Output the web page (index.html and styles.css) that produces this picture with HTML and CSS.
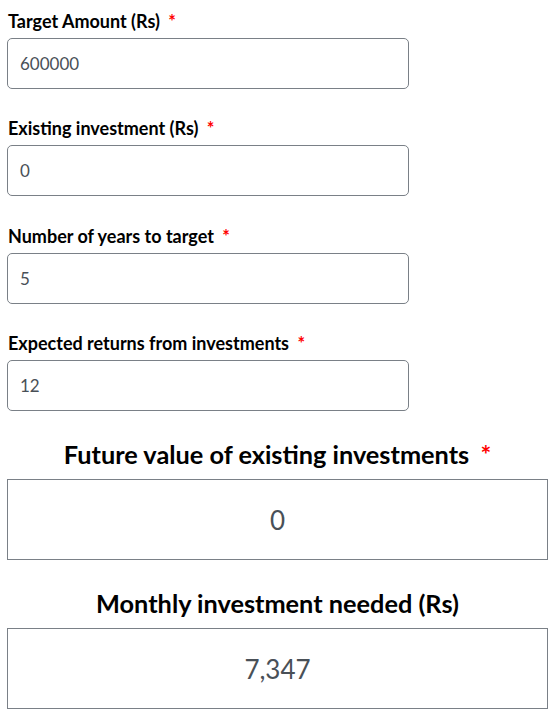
FILE: index.html
```html
<!DOCTYPE html>
<html>
<head>
<meta charset="utf-8">
<link rel="stylesheet" href="styles.css">
</head>
<body>
<div class="page">
  <div class="field">
    <label class="label">Target Amount (Rs) <span class="req">*</span></label>
    <div class="input">600000</div>
  </div>
  <div class="field">
    <label class="label">Existing investment (Rs) <span class="req">*</span></label>
    <div class="input">0</div>
  </div>
  <div class="field">
    <label class="label">Number of years to target <span class="req">*</span></label>
    <div class="input">5</div>
  </div>
  <div class="field">
    <label class="label">Expected returns from investments <span class="req">*</span></label>
    <div class="input">12</div>
  </div>
  <div class="result">
    <h2 class="result-title">Future value of existing investments <span class="req">*</span></h2>
    <div class="result-box">0</div>
  </div>
  <div class="result">
    <h2 class="result-title">Monthly investment needed (Rs)</h2>
    <div class="result-box">7,347</div>
  </div>
</div>
</body>
</html>
```
FILE: styles.css
```css
html, body {
  margin: 0;
  padding: 0;
  background: #ffffff;
}
body {
  font-family: Lato, "Open Sans", sans-serif;
  color: #000;
}
.page {
  width: 541px;
  padding: 9px 0 0 7px;
}
.field {
  margin-bottom: 27.3px;
}
.field:last-of-type {
  margin-bottom: 0;
}
.label {
  display: block;
  font-size: 18px;
  line-height: 24px;
  font-weight: 700;
  margin: 0 0 5px 1px;
  color: #000;
}
.req {
  color: #ff0000;
  margin-left: 4px;
  font-weight: 700;
}
.input {
  box-sizing: border-box;
  width: 402px;
  height: 51px;
  border: 1px solid #7a8087;
  border-radius: 5px;
  padding: 0 12px;
  font-size: 17px;
  line-height: 49px;
  color: #495057;
}
.result {
  margin-top: 29.2px;
}
.result-title {
  margin: 0 0 10px 0;
  text-align: center;
  font-size: 25.3px;
  line-height: 29px;
  font-weight: 700;
}
.result-title .req {
  margin-left: 5px;
}
.result-box {
  box-sizing: border-box;
  width: 541px;
  height: 81px;
  border: 1px solid #7a8087;
  text-align: center;
  font-size: 26px;
  line-height: 80px;
  color: #495057;
}
```
